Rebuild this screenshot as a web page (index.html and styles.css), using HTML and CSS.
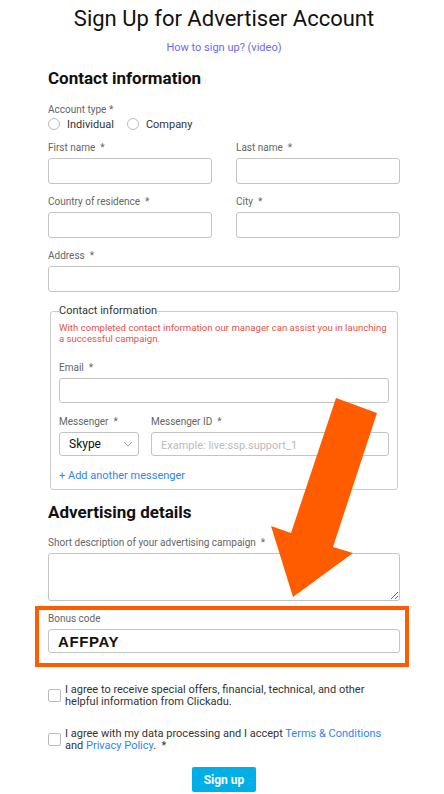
FILE: index.html
```html
<!DOCTYPE html>
<html lang="en">
<head>
    <meta charset="UTF-8">
    <meta name="viewport" content="width=device-width, initial-scale=1.0">
    <title>Sign Up for Advertiser Account</title>
    <link rel="stylesheet" href="styles.css">
</head>
<body>
    <div class="page">
        <h1 class="title">Sign Up for Advertiser Account</h1>
        <a class="video-link" href="#">How to sign up? (video)</a>

        <h2 class="section">Contact information</h2>

        <div class="label type">Account type *</div>
        <div class="radios">
            <label class="radio"><span class="circle"></span>Individual</label>
            <label class="radio"><span class="circle"></span>Company</label>
        </div>

        <div class="row">
            <div class="field">
                <div class="label">First name &nbsp;*</div>
                <input class="input" type="text">
            </div>
            <div class="field">
                <div class="label">Last name &nbsp;*</div>
                <input class="input" type="text">
            </div>
        </div>
        <div class="row">
            <div class="field">
                <div class="label">Country of residence &nbsp;*</div>
                <input class="input" type="text">
            </div>
            <div class="field">
                <div class="label">City &nbsp;*</div>
                <input class="input" type="text">
            </div>
        </div>
        <div class="field">
            <div class="label">Address &nbsp;*</div>
            <input class="input" type="text">
        </div>

        <fieldset class="contact">
            <legend>Contact information</legend>
            <p class="note">With completed contact information our manager can assist you in launching a successful campaign.</p>
            <div class="field email">
                <div class="label">Email &nbsp;*</div>
                <input class="input mid" type="text">
            </div>
            <div class="messenger">
                <div class="field">
                    <div class="label">Messenger &nbsp;*</div>
                    <div class="select-wrap">
                        <select class="select">
                            <option>Skype</option>
                        </select>
                        <svg class="chevron" width="10" height="6" viewBox="0 0 10 6"><path d="M1 1l4 4 4-4" fill="none" stroke="#999" stroke-width="1"/></svg>
                    </div>
                </div>
                <div class="field grow">
                    <div class="label">Messenger ID &nbsp;*</div>
                    <input class="input short" type="text" placeholder="Example: live:ssp.support_1">
                </div>
            </div>
            <a class="add-link" href="#">+ Add another messenger</a>
        </fieldset>

        <h2 class="section ad">Advertising details</h2>
        <div class="field">
            <div class="label">Short description of your advertising campaign &nbsp;*</div>
            <textarea class="textarea"></textarea>
        </div>

        <div class="bonus">
            <div class="label">Bonus code</div>
            <input class="input short code" type="text" value="AFFPAY">
        </div>

        <label class="check first">
            <span class="box"></span>
            <span>I agree to receive special offers, financial, technical, and other helpful information from Clickadu.</span>
        </label>
        <label class="check">
            <span class="box"></span>
            <span>I agree with my data processing and I accept <a href="#">Terms &amp; Conditions</a> and <a href="#">Privacy Policy</a>. &nbsp;*</span>
        </label>

        <div class="actions">
            <button class="submit">Sign up</button>
        </div>
    </div>

    <svg class="arrow" width="444" height="794" viewBox="0 0 444 794">
        <polygon points="336,398 377,413 333,547 353,553 293,597 271,526 291,533" fill="#ff5c00"/>
    </svg>
</body>
</html>
```

FILE: styles.css
```css
body {
    margin: 0;
    font-family: Roboto, "Liberation Sans", sans-serif;
    color: #333;
    background: #fff;
}

.page {
    width: 352px;
    margin-left: 48px;
    padding-bottom: 4px;
}

.title {
    margin: 5px 0 9px;
    font-size: 22px;
    line-height: 28px;
    font-weight: 400;
    color: #111;
    text-align: center;
}

.video-link {
    display: block;
    font-size: 11px;
    line-height: 12px;
    text-align: center;
    color: #6a6cf0;
    text-decoration: none;
}

.section {
    margin: 14px 0 16px;
    font-size: 17px;
    line-height: 20px;
    font-weight: 700;
    color: #111;
}

.section.ad {
    margin-top: 12px;
    margin-bottom: 15px;
}

.label {
    font-size: 10px;
    line-height: 12px;
    color: #666;
    margin-bottom: 4px;
}

.label.type {
    margin-bottom: 2px;
}

.radios {
    display: flex;
    gap: 13px;
    height: 12px;
    margin-bottom: 12px;
}

.radio {
    display: flex;
    align-items: center;
    gap: 7px;
    font-size: 11px;
    color: #333;
}

.circle {
    width: 10px;
    height: 10px;
    border: 1px solid #bbb;
    border-radius: 50%;
}

.row {
    display: flex;
    gap: 24px;
}

.row .field {
    flex: 1;
}

.field {
    margin-bottom: 12px;
}

.input,
.select,
.textarea {
    display: block;
    box-sizing: border-box;
    width: 100%;
    height: 26px;
    margin: 0;
    border: 1px solid #c4c4c4;
    border-radius: 3px;
    background: #fff;
    font-family: inherit;
}

.input.mid {
    height: 25px;
}

.input.short {
    height: 24px;
}

.input::placeholder {
    color: #bbb;
    font-size: 11px;
}

.contact {
    margin: 13px 2px 0;
    padding: 0 8px 7px;
    border: 1px solid #ccc;
    border-radius: 3px;
}

.contact legend {
    padding: 0;
    font-size: 11px;
    line-height: 12px;
    color: #333;
}

.note {
    margin: 5px 0 18px;
    font-size: 9.6px;
    line-height: 11px;
    color: #e5534b;
}

.contact .email {
    margin-bottom: 13px;
}

.messenger {
    display: flex;
    gap: 12px;
}

.messenger .field {
    margin-bottom: 14px;
}

.messenger .grow {
    flex: 1;
}

.messenger .input {
    padding-left: 9px;
}

.select-wrap {
    position: relative;
    width: 80px;
}

.select {
    appearance: none;
    height: 24px;
    padding-left: 9px;
    font-size: 12px;
    color: #111;
}

.chevron {
    position: absolute;
    right: 6px;
    top: 9px;
}

.add-link {
    display: block;
    font-size: 11px;
    line-height: 12px;
    color: #2d86f0;
    text-decoration: none;
}

.textarea {
    height: 48px;
    resize: vertical;
}

.bonus {
    margin: -7px -9px 0 -13px;
    padding: 3px 5px 10px 9px;
    border: 4px solid #ff5c00;
}

.code {
    padding-left: 9px;
    font-family: "Liberation Sans", Arial, sans-serif;
    font-size: 15px;
    font-weight: 700;
    letter-spacing: 0.6px;
    color: #111;
}

.check {
    display: flex;
    align-items: flex-start;
    gap: 4px;
    font-size: 11px;
    line-height: 12px;
    color: #333;
    margin-top: 20px;
}

.check.first {
    margin-top: 17px;
}

.box {
    flex: none;
    width: 11px;
    height: 11px;
    margin-top: 5px;
    border: 1px solid #bbb;
    border-radius: 2px;
}

.check a {
    color: #2d86f0;
    text-decoration: none;
}

.actions {
    display: flex;
    justify-content: center;
    margin-top: 15px;
}

.submit {
    width: 64px;
    height: 25px;
    padding: 0;
    border: none;
    border-radius: 2px;
    background: #00afe6;
    color: #fff;
    font-family: inherit;
    font-size: 12px;
    font-weight: 700;
}

.arrow {
    position: absolute;
    left: 0;
    top: 0;
    pointer-events: none;
}
```
